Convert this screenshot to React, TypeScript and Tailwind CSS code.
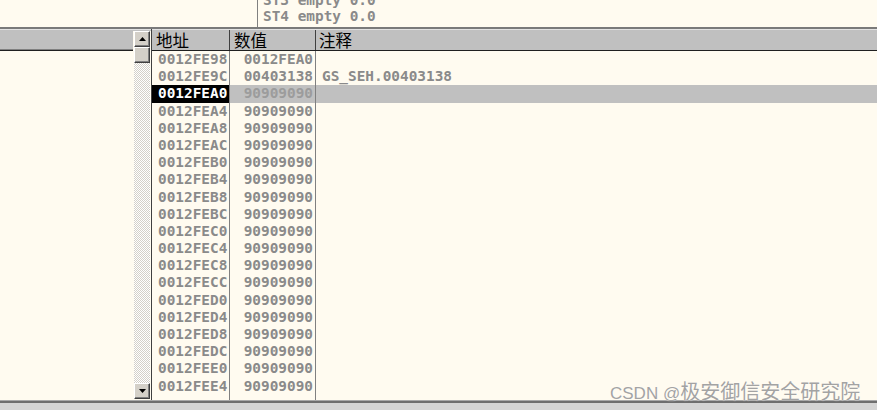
import React from "react";

const rows: [string, string, string][] = [
  ["0012FE98", "0012FEA0", ""],
  ["0012FE9C", "00403138", "GS_SEH.00403138"],
  ["0012FEA0", "90909090", ""],
  ["0012FEA4", "90909090", ""],
  ["0012FEA8", "90909090", ""],
  ["0012FEAC", "90909090", ""],
  ["0012FEB0", "90909090", ""],
  ["0012FEB4", "90909090", ""],
  ["0012FEB8", "90909090", ""],
  ["0012FEBC", "90909090", ""],
  ["0012FEC0", "90909090", ""],
  ["0012FEC4", "90909090", ""],
  ["0012FEC8", "90909090", ""],
  ["0012FECC", "90909090", ""],
  ["0012FED0", "90909090", ""],
  ["0012FED4", "90909090", ""],
  ["0012FED8", "90909090", ""],
  ["0012FEDC", "90909090", ""],
  ["0012FEE0", "90909090", ""],
  ["0012FEE4", "90909090", ""],
];

const SEL = 2;
const mono = { fontFamily: '"DejaVu Sans Mono", "Liberation Mono", monospace' };
const cjk = { fontFamily: '"Noto Sans CJK SC", "Noto Sans", sans-serif' };

function HeaderBar({ children, className = "" }: { children?: React.ReactNode; className?: string }) {
  return (
    <div className={"flex flex-col h-[22px] shrink-0 " + className}>
      <div className="h-px bg-[#e2e2e2]" />
      <div className="flex-1 bg-[#c0c0c0] flex items-center">{children}</div>
      <div className="h-px bg-[#808080]" />
      <div className="h-px bg-[#202020]" />
    </div>
  );
}

function Btn({ dir }: { dir?: "up" | "down" }) {
  return (
    <div className="h-[16px] w-[16px] bg-[#d4d0c8] border-t border-l border-[#ffffff] border-b border-r border-b-[#404040] border-r-[#404040] shadow-[inset_-1px_-1px_0_#808080] flex items-center justify-center">
      {dir && (
        <svg width="7" height="4" viewBox="0 0 7 4">
          {dir === "up" ? (
            <polygon points="3.5,0 7,4 0,4" fill="#000" />
          ) : (
            <polygon points="0,0 7,0 3.5,4" fill="#000" />
          )}
        </svg>
      )}
    </div>
  );
}

export default function App() {
  return (
    <div className="relative w-[877px] h-[410px] bg-[#fffbf0] flex flex-col overflow-hidden text-[#8a8a8a]" style={mono}>
      {/* top FPU area */}
      <div className="h-[27px] flex shrink-0">
        <div className="w-[257px]" />
        <div className="flex-1 border-l border-[#808080] pl-[5px] flex flex-col justify-end pb-[3px] overflow-hidden">
          <div className="h-[16px] leading-[16px] text-[14.4px] font-bold shrink-0 whitespace-pre">ST3 empty 0.0</div>
          <div className="h-[16px] leading-[16px] text-[14.4px] font-bold shrink-0 whitespace-pre">ST4 empty 0.0</div>
        </div>
      </div>
      <div className="h-[2px] bg-[#7a7a7a] shrink-0" />

      {/* main */}
      <div className="h-[371px] flex shrink-0">
        {/* left pane */}
        <div className="w-[133px] flex flex-col">
          <HeaderBar />
        </div>
        {/* scrollbar */}
        <div className="w-[18px] flex flex-col">
          <div className="h-[2px] bg-[#c0c0c0] border-t border-[#e2e2e2]" />
          <div className="px-[1px] flex flex-col flex-1">
            <Btn dir="up" />
            <Btn />
            <div className="flex-1 bg-[image:repeating-conic-gradient(#d4d0c8_0%_25%,#ffffff_0%_50%)] bg-[length:2px_2px]" />
            <Btn dir="down" />
            <div className="h-px" />
          </div>
        </div>
        {/* table */}
        <div className="flex-1 flex flex-col border-l border-[#404040]">
          <HeaderBar>
            <div className="w-[78px] h-full border-r border-[#404040] pl-[4px] text-[16.5px] leading-[20px] text-black flex items-center" style={cjk}>地址</div>
            <div className="w-[86px] h-full border-r border-[#404040] pl-[4px] text-[16.5px] leading-[20px] text-black flex items-center" style={cjk}>数值</div>
            <div className="flex-1 h-full pl-[3px] text-[16.5px] leading-[20px] text-black flex items-center" style={cjk}>注释</div>
          </HeaderBar>
          <div className="flex-1 flex text-[14.4px] font-bold">
            <div className="w-[78px] border-r border-[#808080] flex flex-col">
              {rows.map((r, i) => (
                <div key={i} className={"h-[17.2px] leading-[17.2px] pl-[6px] whitespace-pre " + (i === SEL ? "bg-black text-white" : "")}>{r[0]}</div>
              ))}
            </div>
            <div className="w-[86px] border-r border-[#808080] flex flex-col">
              {rows.map((r, i) => (
                <div key={i} className={"h-[17.2px] leading-[17.2px] pr-[2px] text-right whitespace-pre " + (i === SEL ? "bg-[#c0c0c0] text-[#9c9c9c]" : "")}>{r[1]}</div>
              ))}
            </div>
            <div className="flex-1 flex flex-col">
              {rows.map((r, i) => (
                <div key={i} className={"h-[17.2px] leading-[17.2px] pl-[6px] whitespace-pre " + (i === SEL ? "bg-[#c0c0c0]" : "")}>{r[2]}</div>
              ))}
            </div>
          </div>
        </div>
      </div>

      {/* bottom */}
      <div className="h-px bg-[#a8a8a8] shrink-0" />
      <div className="h-[2px] bg-[#6e6e6e] shrink-0" />
      <div className="flex-1 bg-[#d4d4d4]" />

      {/* watermark */}
      <div className="absolute left-[610px] top-[376px] flex items-baseline text-[#a3a3a3] [text-shadow:0_0_1px_#ffffff] whitespace-pre">
        <span className="text-[17px]" style={{ fontFamily: '"Liberation Sans", Arial, sans-serif' }}>CSDN @</span>
        <span className="text-[20px]" style={cjk}>极安御信安全研究院</span>
      </div>
    </div>
  );
}
